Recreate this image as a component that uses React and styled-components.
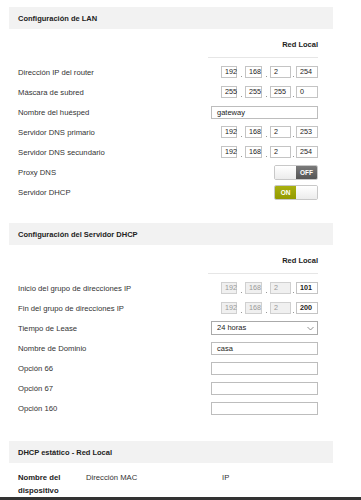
import React from "react";
import styled, { createGlobalStyle } from "styled-components";

const Global = createGlobalStyle`
  html, body { margin: 0; padding: 0; background: #fff; }
  body { font-family: "Liberation Sans", Arial, sans-serif; color: #333; }
`;

const Page = styled.div`
  padding: 7px 28px 0 9px;
`;

const Section = styled.section`
  margin-bottom: ${(p) => p.$gap || 0}px;
`;

const SectionHeader = styled.div`
  height: 22px;
  background: #f2f2f2;
  display: flex;
  align-items: center;
  padding: 0 9px;
  font-size: 7.5px;
  font-weight: bold;
  color: #222;
`;

const Body = styled.div`
  padding: 0 15px 0 9px;
`;

const ColumnHead = styled.div`
  display: grid;
  grid-template-columns: 1fr 110px;
  padding-top: 8px;
`;

const ColumnTitle = styled.div`
  grid-column: 2;
  text-align: right;
  font-size: 7.5px;
  font-weight: bold;
  color: #222;
  height: 20px;
  line-height: 16px;
  border-bottom: 1px solid #e6e6e6;
`;

const Rows = styled.div`
  padding-top: 4px;
`;

const Row = styled.div`
  display: grid;
  grid-template-columns: 1fr 107px;
  align-items: center;
  height: 20px;
`;

const Label = styled.div`
  font-size: 7.7px;
  color: #333;
`;

const Control = styled.div`
  display: flex;
  justify-content: flex-end;
  align-items: center;
`;

const IpGroup = styled.div`
  display: flex;
  align-items: flex-end;
`;

const Octet = styled.div`
  box-sizing: border-box;
  width: ${(p) => p.$w}px;
  height: 12px;
  border: 1px solid ${(p) => (p.$disabled ? "#d0d0d0" : "#c4c4c4")};
  background: ${(p) => (p.$disabled ? "#f0f0f0" : "#fff")};
  font-size: 7.2px;
  line-height: 10px;
  padding-left: 3px;
  color: ${(p) => (p.$disabled ? "#999" : "#222")};
  font-weight: ${(p) => (p.$strong ? "bold" : "normal")};
`;

const Dot = styled.span`
  width: ${(p) => p.$w}px;
  display: flex;
  justify-content: center;
  align-items: flex-end;
  height: 12px;
  &::after {
    content: "";
    width: 1px;
    height: 1px;
    background: #999;
    margin-bottom: 1px;
  }
`;

const TextBox = styled.div`
  box-sizing: border-box;
  width: 107px;
  height: 13px;
  border: 1px solid #bdbdbd;
  background: #fff;
  font-size: 7.5px;
  line-height: 11px;
  padding-left: 5px;
  color: #222;
`;

const SelectBox = styled(TextBox)`
  height: 14px;
  line-height: 12px;
  display: flex;
  justify-content: space-between;
  align-items: center;
  padding-right: 3px;
  border-color: #aaa;
`;

const Toggle = styled.div`
  box-sizing: border-box;
  width: 44px;
  height: 15px;
  border: 1px solid #c8c8c8;
  border-radius: 2px;
  display: flex;
  overflow: hidden;
`;

const ToggleHalf = styled.div`
  flex: 1;
  display: flex;
  align-items: center;
  justify-content: center;
  font-size: 6.5px;
  font-weight: bold;
  color: #fff;
  background: ${(p) =>
    p.$kind === "off"
      ? "linear-gradient(#7a7a7a, #555)"
      : p.$kind === "on"
      ? "linear-gradient(#a9b010, #939a00)"
      : "linear-gradient(#fff, #ececec)"};
`;

const TableHead = styled.div`
  display: grid;
  grid-template-columns: 68px 136px 1fr;
  padding: 8px 0 0 9px;
  font-size: 7.7px;
  line-height: 13px;
  color: #333;
`;

const Th = styled.div`
  font-weight: ${(p) => (p.$bold ? "bold" : "normal")};
  color: ${(p) => (p.$bold ? "#222" : "#333")};
  width: ${(p) => (p.$bold ? "50px" : "auto")};
`;

const Footer = styled.div`
  height: 4px;
  background: #333;
`;

const widths = [16, 17, 21, 22];
const gaps = [8, 8, 5];

function Ip({ values, disabledFirst }) {
  const parts = [];
  values.forEach((v, i) => {
    const dis = disabledFirst && i < 3;
    parts.push(
      <Octet key={"o" + i} $w={widths[i]} $disabled={dis} $strong={disabledFirst && i === 3}>
        {v}
      </Octet>
    );
    if (i < 3) parts.push(<Dot key={"d" + i} $w={gaps[i]} />);
  });
  return <IpGroup>{parts}</IpGroup>;
}

function Switch({ on }) {
  return on ? (
    <Toggle>
      <ToggleHalf $kind="on">ON</ToggleHalf>
      <ToggleHalf />
    </Toggle>
  ) : (
    <Toggle>
      <ToggleHalf />
      <ToggleHalf $kind="off">OFF</ToggleHalf>
    </Toggle>
  );
}

function Chevron() {
  return (
    <svg width="7" height="5" viewBox="0 0 7 5">
      <path d="M0.5 1 L3.5 4 L6.5 1" fill="none" stroke="#777" strokeWidth="0.8" />
    </svg>
  );
}

function FieldRow({ label, children }) {
  return (
    <Row>
      <Label>{label}</Label>
      <Control>{children}</Control>
    </Row>
  );
}

export default function App() {
  return (
    <>
      <Global />
      <Page>
        <Section $gap={21}>
          <SectionHeader>Configuración de LAN</SectionHeader>
          <Body>
            <ColumnHead>
              <ColumnTitle>Red Local</ColumnTitle>
            </ColumnHead>
            <Rows>
              <FieldRow label="Dirección IP del router">
                <Ip values={["192", "168", "2", "254"]} />
              </FieldRow>
              <FieldRow label="Máscara de subred">
                <Ip values={["255", "255", "255", "0"]} />
              </FieldRow>
              <FieldRow label="Nombre del huésped">
                <TextBox>gateway</TextBox>
              </FieldRow>
              <FieldRow label="Servidor DNS primario">
                <Ip values={["192", "168", "2", "253"]} />
              </FieldRow>
              <FieldRow label="Servidor DNS secundario">
                <Ip values={["192", "168", "2", "254"]} />
              </FieldRow>
              <FieldRow label="Proxy DNS">
                <Switch on={false} />
              </FieldRow>
              <FieldRow label="Servidor DHCP">
                <Switch on />
              </FieldRow>
            </Rows>
          </Body>
        </Section>

        <Section $gap={23}>
          <SectionHeader>Configuración del Servidor DHCP</SectionHeader>
          <Body>
            <ColumnHead>
              <ColumnTitle>Red Local</ColumnTitle>
            </ColumnHead>
            <Rows>
              <FieldRow label="Inicio del grupo de direcciones IP">
                <Ip values={["192", "168", "2", "101"]} disabledFirst />
              </FieldRow>
              <FieldRow label="Fin del grupo de direcciones IP">
                <Ip values={["192", "168", "2", "200"]} disabledFirst />
              </FieldRow>
              <FieldRow label="Tiempo de Lease">
                <SelectBox>
                  <span>24 horas</span>
                  <Chevron />
                </SelectBox>
              </FieldRow>
              <FieldRow label="Nombre de Dominio">
                <TextBox>casa</TextBox>
              </FieldRow>
              <FieldRow label="Opción 66">
                <TextBox />
              </FieldRow>
              <FieldRow label="Opción 67">
                <TextBox />
              </FieldRow>
              <FieldRow label="Opción 160">
                <TextBox />
              </FieldRow>
            </Rows>
          </Body>
        </Section>

        <Section>
          <SectionHeader>DHCP estático - Red Local</SectionHeader>
          <TableHead>
            <Th $bold>Nombre del dispositivo</Th>
            <Th>Dirección MAC</Th>
            <Th>IP</Th>
          </TableHead>
        </Section>
      </Page>
      <Footer />
    </>
  );
}
